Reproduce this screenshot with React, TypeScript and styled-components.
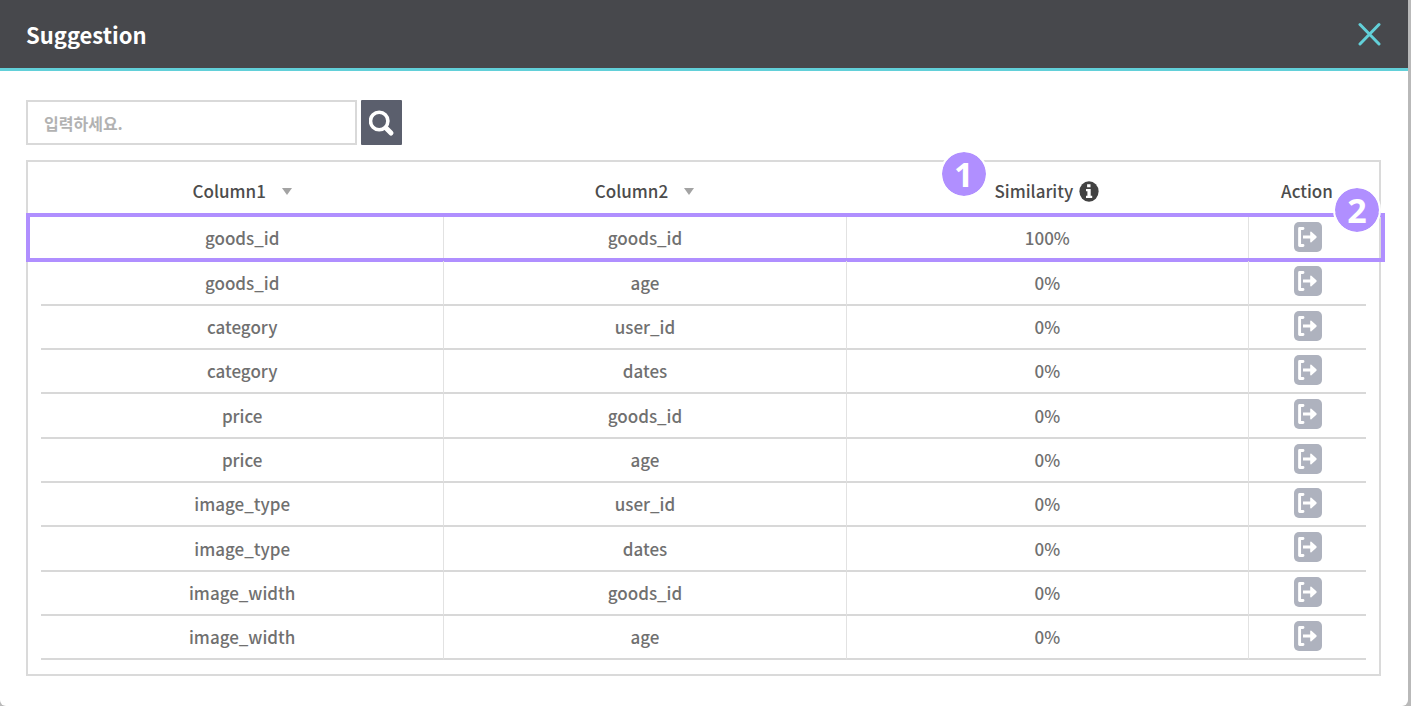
import React from "react";
import styled, { createGlobalStyle } from "styled-components";

const GlobalStyle = createGlobalStyle`
  *, *::before, *::after { box-sizing: border-box; }
  body {
    margin: 0;
    background: #b9b9b9;
    color: #707070;
    font-family: "Noto Sans CJK KR", "Noto Sans", sans-serif;
    font-size: 17px;
    font-weight: 500;
  }
  button { padding: 0; border: 0; cursor: pointer; }
`;

const Dialog = styled.main`
  min-height: 100vh;
  margin-right: 3px;
  background: #ffffff;
  border-radius: 0 0 6px 6px;
`;

const TitleBar = styled.header`
  display: flex;
  align-items: center;
  justify-content: space-between;
  height: 71px;
  padding: 0 26px;
  background: #47484c;
  border-bottom: 3px solid #62d0d9;
`;

const Title = styled.h1`
  margin: 0;
  color: #ffffff;
  font-size: 22px;
  line-height: 36px;
  font-weight: 700;
`;

const CloseButton = styled.button`
  display: flex;
  background: transparent;
`;

const Content = styled.div`
  padding: 29px 27px 30px 26px;
`;

const SearchForm = styled.form`
  display: flex;
  gap: 4px;
  margin-bottom: 15px;
`;

const SearchInput = styled.input`
  width: 331px;
  height: 45px;
  padding: 0 16px;
  border: 2px solid #d9d9d9;
  font: 700 16px "Noto Sans CJK KR", sans-serif;
  outline: 0;
  &::placeholder { color: #b2b2b2; opacity: 1; }
`;

const SearchButton = styled.button`
  display: flex;
  align-items: center;
  justify-content: center;
  width: 41px;
  height: 45px;
  border-radius: 1px;
  background: #5b5f6d;
`;

const Panel = styled.section`
  padding: 0 13px 14px;
  border: 2px solid #dadada;
`;

const Table = styled.table`
  width: 100%;
  table-layout: fixed;
  border-collapse: separate;
  border-spacing: 0;
`;

const HeadCell = styled.th<{ $narrow?: boolean }>`
  width: ${(p) => (p.$narrow ? "118px" : "auto")};
  height: 55px;
  padding: 2px 0 0;
  color: #4c4c4c;
  font-weight: 500;
`;

const HeadContent = styled.div<{ $gap: number }>`
  position: relative;
  display: flex;
  align-items: center;
  justify-content: center;
  gap: ${(p) => p.$gap}px;
  line-height: 26px;
`;

const Row = styled.tr`
  position: relative;
  height: 44px;
  &:nth-child(3n + 2) { height: 45px; }
`;

const Cell = styled.td`
  padding: 0;
  border-bottom: 2px solid #d8d8d8;
  line-height: 26px;
  text-align: center;
  & + & { border-left: 1px solid #e2e2e2; }
`;

const ActionButton = styled.button`
  display: block;
  margin: 0 auto;
  background: transparent;
`;

const Highlight = styled.span`
  position: absolute;
  inset: -4px -19px -1px -15px;
  border: 4px solid #b08fff;
  pointer-events: none;
`;

const Badge = styled.span<{ $top: number; $left?: string; $right?: string }>`
  position: absolute;
  top: ${(p) => p.$top}px;
  left: ${(p) => p.$left ?? "auto"};
  right: ${(p) => p.$right ?? "auto"};
  width: 48px;
  height: 48px;
  border: 2px solid #ffffff;
  border-radius: 50%;
  background: #b08fff;
  background-clip: padding-box;
  color: #ffffff;
  font-family: "Noto Sans", sans-serif;
  font-size: 34px;
  font-weight: 700;
  line-height: 44px;
  text-align: center;
  pointer-events: none;
`;

const CloseIcon = () => (
  <svg width="24" height="24" viewBox="0 0 24 24" fill="none" stroke="#62d0d9" strokeWidth="3" strokeLinecap="round" aria-hidden="true">
    <path d="M2 2.5 21 22M21 2.5 2 22" />
  </svg>
);

const SearchIcon = () => (
  <svg width="26" height="28" viewBox="0 0 26 28" fill="none" stroke="#ffffff" aria-hidden="true">
    <circle cx="10.2" cy="12" r="8.7" strokeWidth="3.6" />
    <path d="m17 19 5 5" strokeWidth="5" strokeLinecap="round" />
  </svg>
);

const SortIcon = () => (
  <svg width="10" height="8" viewBox="0 0 10 8" fill="#a3a3a3" aria-hidden="true">
    <path d="M0 1h10L5 8z" />
  </svg>
);

const InfoIcon = () => (
  <svg width="20" height="22" viewBox="0 0 20 22" role="img" aria-label="About similarity">
    <ellipse cx="10" cy="11.5" rx="9.6" ry="10.2" fill="#424242" />
    <path d="M8.1 4.2h3.4v3.1H8.1zM7 8.9h4.7v6.8h1.5V18H7v-2.3h1.4v-4.5H7z" fill="#ffffff" />
  </svg>
);

const ExportIcon = () => (
  <svg width="28" height="30" viewBox="0 0 28 30" aria-hidden="true">
    <rect width="28" height="30" rx="5" fill="#aeb2be" />
    <path d="M9 6.5H5.6v17H9" fill="none" stroke="#ffffff" strokeWidth="2.9" strokeLinecap="round" strokeLinejoin="round" />
    <path d="M9 13.5h7.2V10q.4-.8 1.2-.2l5 4.5q.6.7 0 1.4l-5 4.5q-.8.5-1.2-.3v-3.4H9z" fill="#ffffff" />
  </svg>
);

const pairs = [
  ["goods_id", "goods_id", "100%"],
  ["goods_id", "age", "0%"],
  ["category", "user_id", "0%"],
  ["category", "dates", "0%"],
  ["price", "goods_id", "0%"],
  ["price", "age", "0%"],
  ["image_type", "user_id", "0%"],
  ["image_type", "dates", "0%"],
  ["image_width", "goods_id", "0%"],
  ["image_width", "age", "0%"],
];

export default function App() {
  return (
    <>
      <GlobalStyle />
      <Dialog>
        <TitleBar>
          <Title>Suggestion</Title>
          <CloseButton type="button" aria-label="Close"><CloseIcon /></CloseButton>
        </TitleBar>
        <Content>
          <SearchForm onSubmit={(e) => e.preventDefault()}>
            <SearchInput type="text" aria-label="Search" placeholder="입력하세요." />
            <SearchButton type="submit" aria-label="Search"><SearchIcon /></SearchButton>
          </SearchForm>
          <Panel>
            <Table>
              <thead>
                <tr>
                  <HeadCell><HeadContent $gap={16}>Column1<SortIcon /></HeadContent></HeadCell>
                  <HeadCell><HeadContent $gap={16}>Column2<SortIcon /></HeadContent></HeadCell>
                  <HeadCell>
                    <HeadContent $gap={6}>
                      Similarity<InfoIcon />
                      <Badge $top={-28} $left="94px">1</Badge>
                    </HeadContent>
                  </HeadCell>
                  <HeadCell $narrow><HeadContent $gap={0}>Action</HeadContent></HeadCell>
                </tr>
              </thead>
              <tbody>
                {pairs.map(([first, second, similarity], index) => (
                  <Row key={index}>
                    <Cell>{first}</Cell>
                    <Cell>{second}</Cell>
                    <Cell>{similarity}</Cell>
                    <Cell>
                      <ActionButton type="button" aria-label={`Apply ${first} and ${second}`}><ExportIcon /></ActionButton>
                      {index === 0 && (
                        <>
                          <Highlight />
                          <Badge $top={-31} $right="-15px">2</Badge>
                        </>
                      )}
                    </Cell>
                  </Row>
                ))}
              </tbody>
            </Table>
          </Panel>
        </Content>
      </Dialog>
    </>
  );
}
